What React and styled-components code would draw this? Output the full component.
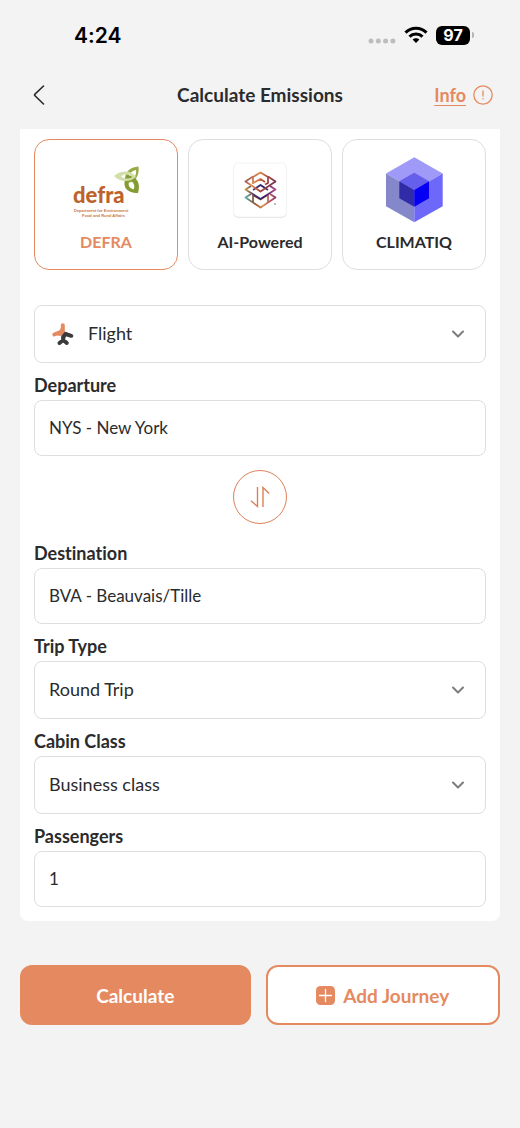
import { useState } from "react";
import styled, { createGlobalStyle } from "styled-components";

const GlobalStyle = createGlobalStyle`
  * {
    box-sizing: border-box;
  }
  body {
    margin: 0;
    background-color: #f3f3f3;
    color: #2b2b2d;
    font-family: Lato, "Open Sans", sans-serif;
    font-variant-ligatures: none;
  }
  button, input, select {
    font-family: inherit;
    color: inherit;
    margin: 0;
  }
  svg {
    display: block;
    flex-shrink: 0;
  }
`;

const Screen = styled.div`
  min-height: 100vh;
  padding-bottom: 40px;
`;
const StatusBar = styled.div`
  display: flex;
  align-items: center;
  justify-content: space-between;
  height: 70px;
  padding: 0 46px 0 74px;
`;
const Clock = styled.span`
  font-family: Inter, sans-serif;
  font-size: 21px;
  font-weight: 600;
  color: black;
`;
const StatusIcons = styled.div`
  display: flex;
  align-items: center;
  gap: 8px;
`;
const Battery = styled.div`
  display: flex;
  align-items: center;
  gap: 2px;
`;
const BatteryLevel = styled.span`
  width: 34px;
  height: 19px;
  border-radius: 6px;
  background-color: black;
  color: white;
  font-family: Inter, sans-serif;
  font-size: 16px;
  font-weight: 700;
  line-height: 19px;
  text-align: center;
`;
const BatteryTip = styled.span`
  width: 2px;
  height: 6px;
  border-radius: 0 2px 2px 0;
  background-color: #b4b4b4;
`;
const Header = styled.header`
  display: grid;
  grid-template-columns: 1fr auto 1fr;
  align-items: center;
  height: 50px;
  margin-bottom: 9px;
  padding: 0 27px;
`;
const BackButton = styled.button`
  justify-self: start;
  padding: 6px;
  border: none;
  background: none;
  cursor: pointer;
`;
const Title = styled.h1`
  margin: 0;
  font-size: 19px;
  font-weight: 700;
  line-height: 22px;
`;
const InfoLink = styled.a`
  justify-self: end;
  display: flex;
  align-items: center;
  gap: 7px;
  color: #e58a60;
  font-size: 18px;
  font-weight: 700;
  line-height: 22px;
  text-decoration: none;
  span {
    text-decoration: underline;
    text-underline-offset: 3px;
  }
`;
const Card = styled.main`
  margin: 0 20px;
  padding: 10px 14px 14px;
  border-radius: 0 0 8px 8px;
  background-color: white;
`;
const Providers = styled.div`
  display: grid;
  grid-template-columns: repeat(3, 1fr);
  gap: 10px;
  margin-bottom: 35px;
`;
const Provider = styled.button`
  display: flex;
  flex-direction: column;
  align-items: center;
  gap: 8px;
  padding: 17px 0 16px;
  border: 1px solid ${(props) => (props.$active ? "#e58a60" : "#dedede")};
  border-radius: 15px;
  background-color: white;
  color: ${(props) => (props.$active ? "#e58a60" : "#2b2b2d")};
  font-size: 16px;
  font-weight: 700;
  line-height: 22px;
  cursor: pointer;
`;
const Label = styled.label`
  display: block;
  padding: 11px 0 4px;
  font-size: 18px;
  font-weight: 700;
  line-height: 22px;
`;
const TextInput = styled.input`
  display: block;
  width: 100%;
  height: 56px;
  padding: 0 14px 2px;
  border: 1px solid #dedede;
  border-radius: 8px;
  background-color: white;
  font-size: 17px;
`;
const SelectBox = styled.div`
  position: relative;
`;
const Select = styled.select`
  display: block;
  width: 100%;
  height: 58px;
  padding: 0 44px 2px ${(props) => (props.$withIcon ? "53px" : "14px")};
  border: 1px solid #dedede;
  border-radius: 8px;
  background-color: white;
  font-size: 18px;
  appearance: none;
`;
const LeadIcon = styled.span`
  position: absolute;
  top: 17px;
  left: 17px;
  pointer-events: none;
`;
const Arrow = styled.span`
  position: absolute;
  top: 25px;
  right: 21px;
  pointer-events: none;
`;
const SwapButton = styled.button`
  display: flex;
  align-items: center;
  justify-content: center;
  width: 54px;
  height: 54px;
  margin: 14px auto 7px;
  padding: 0;
  border: 1px solid #dc8058;
  border-radius: 50%;
  background-color: white;
  cursor: pointer;
`;
const Actions = styled.div`
  display: grid;
  grid-template-columns: 58fr 59fr;
  gap: 15px;
  margin: 44px 20px 0;
`;
const ActionButton = styled.button`
  display: flex;
  align-items: center;
  justify-content: center;
  gap: 8px;
  height: 60px;
  border: 2px solid #e58a60;
  border-radius: 12px;
  background-color: ${(props) => (props.$outline ? "white" : "#e58a60")};
  color: ${(props) => (props.$outline ? "#e58a60" : "white")};
  font-size: 19px;
  font-weight: 700;
  cursor: pointer;
`;

const SignalDots = () => (
  <svg width="28" height="18" viewBox="0 0 28 18" fill="#bdbdbd">
    <circle cx="3" cy="15" r="2.5" />
    <circle cx="10.3" cy="15" r="2.5" />
    <circle cx="17.6" cy="15" r="2.5" />
    <circle cx="24.9" cy="15" r="2.5" />
  </svg>
);

const WifiIcon = () => (
  <svg width="24" height="18" viewBox="0 0 24 18" fill="none" stroke="black" strokeWidth="3">
    <path d="M1.5 6.6C7.3 .9 16.7 .9 22.5 6.6" />
    <path d="M5.5 10.6C9.1 7.1 14.9 7.1 18.5 10.6" />
    <path d="M8.6 13.6C10.5 11.8 13.5 11.8 15.4 13.6L12 17Z" fill="black" stroke="none" />
  </svg>
);

const DefraLogo = () => (
  <svg width="70" height="66" viewBox="0 0 70 66">
    <path
      fillRule="evenodd"
      fill="#97ab45"
      d="M67.5 9.5C59 10 53 15 54 25C62 28 69 20 67.5 9.5ZM65 13C60 14 57 18 57 23C62 23 66 19 65 13Z"
    />
    <path
      fillRule="evenodd"
      fill="#849c33"
      d="M67 36C55 36 50 29 56 18C66 19 70 26 67 36ZM58.5 23C56.5 28 58 31 62.5 32.5C64.5 29 63 25 58.5 23Z"
    />
    <path
      fillRule="evenodd"
      fill="#d3dfaa"
      d="M43 19C50 13 60 13 65 20C58 26 49 25 43 19ZM50 19.2C54 16.5 58 17 61.5 20C57 22.5 53 22 50 19.2Z"
    />
    <text x="2" y="46" fontFamily="Lato" fontSize="22" fontWeight="900" fill="#bd622b">
      defra
    </text>
    <text x="3" y="55" fontFamily="Liberation Sans" fontSize="4" fill="#c9773f">
      Department for Environment
    </text>
    <text x="54" y="60" textAnchor="end" fontFamily="Liberation Sans" fontSize="4" fill="#c9773f">
      Food and Rural Affairs
    </text>
  </svg>
);

const AiLogo = () => (
  <svg width="66" height="66" viewBox="0 0 66 66">
    <defs>
      <linearGradient id="aiTop" x1="18" y1="15" x2="49" y2="35" gradientUnits="userSpaceOnUse">
        <stop offset="0" stopColor="#6b3a72" />
        <stop offset=".35" stopColor="#e08a4a" />
        <stop offset=".6" stopColor="#a8483c" />
        <stop offset="1" stopColor="#54245e" />
      </linearGradient>
      <linearGradient id="aiMiddle" x1="18" y1="0" x2="49" y2="0" gradientUnits="userSpaceOnUse">
        <stop offset="0" stopColor="#c9a13c" />
        <stop offset=".3" stopColor="#4a2f78" />
        <stop offset=".6" stopColor="#252064" />
        <stop offset="1" stopColor="#c2478c" />
      </linearGradient>
      <linearGradient id="aiBottom" x1="18" y1="0" x2="49" y2="0" gradientUnits="userSpaceOnUse">
        <stop offset="0" stopColor="#4fb0b0" />
        <stop offset=".3" stopColor="#94512f" />
        <stop offset=".6" stopColor="#e0894c" />
        <stop offset="1" stopColor="#8b2d72" />
      </linearGradient>
    </defs>
    <rect x="6.5" y="7" width="53" height="54" rx="5" fill="#dcdcdc" />
    <rect x="6.5" y="6" width="53" height="54" rx="5" fill="white" stroke="#f3f3f3" />
    <g fill="none" strokeWidth="1.8" strokeLinejoin="round">
      <path stroke="url(#aiBottom)" d="M24 37L18.5 40.5L33.5 50.5L48.5 40.5L43 37" />
      <path stroke="url(#aiBottom)" d="M26 45V38L33.5 42.5L41 38V45" />
      <path stroke="url(#aiMiddle)" d="M24 29L18.5 32.5L33.5 42L48.5 32.5L43 29" />
      <path stroke="url(#aiMiddle)" d="M26 33L33.5 28L41 33" />
      <path stroke="url(#aiTop)" d="M26 19.5L18.5 24.5L33.5 34.5L48.5 24.5L41 19.5" />
      <path stroke="url(#aiTop)" d="M26 27V20L33.5 15.5L41 20V26L38 27.5M26 26L33.5 22L38 25" />
    </g>
    <circle cx="48" cy="47" r="1" fill="#a5a5b5" />
  </svg>
);

const ClimatiqLogo = () => (
  <svg width="66" height="66" viewBox="0 0 66 66">
    <path fill="#9f99f7" d="M33.3 .3L61.7 16.5L33.3 33L5 16.5Z" />
    <path fill="#8488cb" d="M5 16.5L33.3 33V65.3L5 49.3Z" />
    <path fill="#6d68fa" d="M61.7 16.5V49.3L33.3 65.3V33Z" />
    <path fill="#655fec" d="M33.3 15.7L48 24.3L33.3 33L18.3 24.3Z" />
    <path fill="#302ca8" d="M18.3 24.3L33.3 33V49.7L18.3 41.3Z" />
    <path fill="#0500f3" d="M48 24.3V41.3L33.3 49.7V33Z" />
  </svg>
);

const PlaneIcon = () => (
  <svg width="24" height="24" viewBox="0 0 24 24" fill="none" strokeLinecap="round" strokeLinejoin="round">
    <path stroke="#3b3b3d" strokeWidth="4" d="M13 11.5L20.3 13.8M12.3 12V18L8.5 21M12.3 18L15.8 21" />
    <path fill="#3b3b3d" d="M11 10L17 11L13.5 17L10.3 18Z" />
    <path stroke="#e58a60" strokeWidth="4" d="M11.8 3.2V9.2L3.3 12.5" />
    <path fill="#e58a60" d="M10 6L13.8 9.5L10.5 14L6 13.5Z" />
  </svg>
);

const SwapIcon = () => (
  <svg width="22" height="22" viewBox="0 0 22 22" fill="none" stroke="#dc8058" strokeWidth="1.4">
    <path d="M8.5 1V20.5L2 14.8M14 21V1.5L20 7.5" />
  </svg>
);

const PlusIcon = () => (
  <svg width="19" height="19" viewBox="0 0 19 19">
    <rect width="19" height="19" rx="4.5" fill="#e58a60" />
    <path d="M9.5 3.5V15.5M3.5 9.5H15.5" stroke="white" strokeWidth="1.3" strokeLinecap="round" />
  </svg>
);

const providers = [
  { name: "DEFRA", Logo: DefraLogo },
  { name: "AI-Powered", Logo: AiLogo },
  { name: "CLIMATIQ", Logo: ClimatiqLogo },
];

const SelectField = ({ id, label, icon, options, hideLabel }) => (
  <div>
    {!hideLabel && <Label htmlFor={id}>{label}</Label>}
    <SelectBox>
      {icon && <LeadIcon>{icon}</LeadIcon>}
      <Select id={id} $withIcon={!!icon} aria-label={hideLabel ? label : undefined}>
        {options.map((option) => (
          <option key={option}>{option}</option>
        ))}
      </Select>
      <Arrow>
        <svg width="14" height="9" viewBox="0 0 14 9" fill="none" stroke="#7c7c7e" strokeWidth="2">
          <path d="M2 1.5L7 6.5L12 1.5" strokeLinecap="round" strokeLinejoin="round" />
        </svg>
      </Arrow>
    </SelectBox>
  </div>
);

const App = () => {
  const [provider, setProvider] = useState("DEFRA");
  const [departure, setDeparture] = useState("NYS - New York");
  const [destination, setDestination] = useState("BVA - Beauvais/Tille");
  const [passengers, setPassengers] = useState("1");

  const swap = () => {
    setDeparture(destination);
    setDestination(departure);
  };

  return (
    <Screen>
      <GlobalStyle />
      <StatusBar>
        <Clock>4:24</Clock>
        <StatusIcons>
          <SignalDots />
          <WifiIcon />
          <Battery>
            <BatteryLevel>97</BatteryLevel>
            <BatteryTip />
          </Battery>
        </StatusIcons>
      </StatusBar>
      <Header>
        <BackButton aria-label="Back">
          <svg width="12" height="20" viewBox="0 0 12 20" fill="none" stroke="#2b2b2d" strokeWidth="1.6">
            <path d="M10.5 1L2 9.2Q1.2 10 2 10.8L10.5 19" strokeLinecap="round" />
          </svg>
        </BackButton>
        <Title>Calculate Emissions</Title>
        <InfoLink href="#info">
          <span>Info</span>
          <svg width="20" height="20" viewBox="0 0 20 20" fill="none" stroke="#e58a60" strokeWidth="1.3">
            <circle cx="10" cy="10" r="9.2" />
            <path d="M10 5.5V11.5M10 13.2V14.6" />
          </svg>
        </InfoLink>
      </Header>
      <Card>
        <Providers>
          {providers.map(({ name, Logo }) => (
            <Provider
              key={name}
              $active={provider === name}
              aria-pressed={provider === name}
              onClick={() => setProvider(name)}
            >
              <Logo />
              <span>{name}</span>
            </Provider>
          ))}
        </Providers>
        <SelectField id="mode" label="Travel mode" hideLabel icon={<PlaneIcon />} options={["Flight"]} />
        <Label htmlFor="departure">Departure</Label>
        <TextInput id="departure" value={departure} onChange={(e) => setDeparture(e.target.value)} />
        <SwapButton aria-label="Swap" onClick={swap}>
          <SwapIcon />
        </SwapButton>
        <Label htmlFor="destination">Destination</Label>
        <TextInput id="destination" value={destination} onChange={(e) => setDestination(e.target.value)} />
        <SelectField id="trip" label="Trip Type" options={["Round Trip", "One Way"]} />
        <SelectField id="cabin" label="Cabin Class" options={["Business class", "Economy class"]} />
        <Label htmlFor="passengers">Passengers</Label>
        <TextInput
          id="passengers"
          inputMode="numeric"
          value={passengers}
          onChange={(e) => setPassengers(e.target.value)}
        />
      </Card>
      <Actions>
        <ActionButton>Calculate</ActionButton>
        <ActionButton $outline>
          <PlusIcon />
          Add Journey
        </ActionButton>
      </Actions>
    </Screen>
  );
};

export default App;
